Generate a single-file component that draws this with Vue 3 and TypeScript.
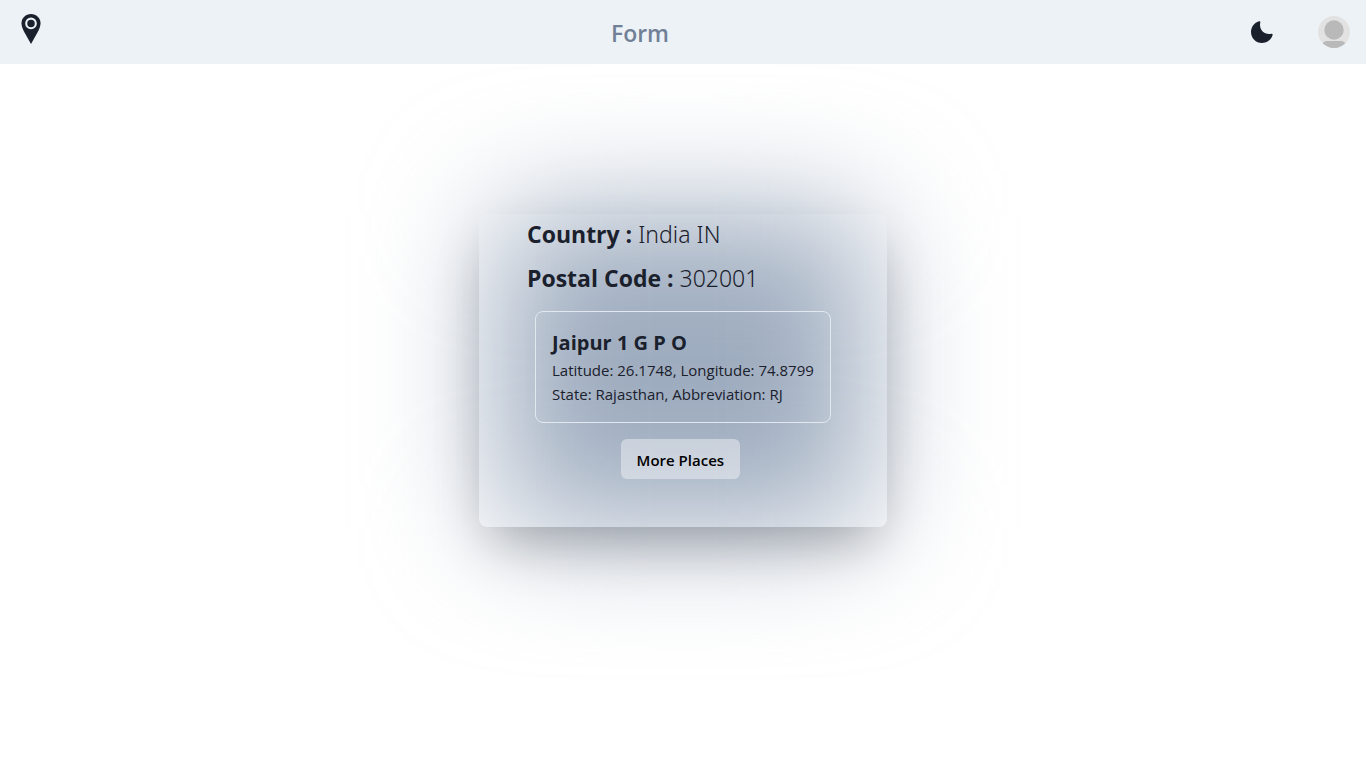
<script setup lang="ts">
import { ref } from 'vue'

interface Place {
  name: string
  latitude: string
  longitude: string
  state: string
  abbreviation: string
}

const country = 'India IN'
const postalCode = '302001'
const places = ref<Place[]>([
  { name: 'Jaipur 1 G P O', latitude: '26.1748', longitude: '74.8799', state: 'Rajasthan', abbreviation: 'RJ' },
])
</script>

<template>
  <div class="page">
    <header class="bar">
      <a class="logo" href="#" aria-label="Home">
        <svg viewBox="0 0 30 30" width="30" height="30" aria-hidden="true">
          <path fill="#1a202c" d="M15 0C9.700 0 5.500 4 5.500 9.200c0 3 1.300 6 2.900 9L15 30l6.600-11.800c1.600-3 2.900-6 2.900-9C24.500 4 20.300 0 15 0z" />
          <circle cx="15" cy="9.400" r="4.800" fill="#1a202c" stroke="#edf2f7" stroke-width="2.100" />
        </svg>
      </a>
      <a class="title" href="#">Form</a>
      <div class="actions">
        <button class="mode" type="button" aria-label="Toggle dark mode">
          <svg viewBox="0 0 24 24" width="24" height="24" aria-hidden="true">
            <path fill="#1a202c" d="M21.4,13.7C20.6,13.9,19.8,14,19,14c-5,0-9-4-9-9c0-0.8,0.1-1.6,0.3-2.4c0.1-0.3,0-0.7-0.3-1 c-0.3-0.3-0.6-0.4-1-0.3C4.3,2.7,1,7.1,1,12c0,6.1,4.9,11,11,11c4.9,0,9.3-3.3,10.6-8.1c0.1-0.3,0-0.7-0.3-1 C22.1,13.7,21.7,13.6,21.4,13.7z" />
          </svg>
        </button>
        <button class="avatar" type="button" aria-label="Account">
          <svg viewBox="0 0 32 32" width="32" height="32" aria-hidden="true">
            <rect width="32" height="32" fill="#e2e2e2" />
            <circle cx="16" cy="14" r="9.700" fill="#b9b9b9" />
            <rect x="4" y="25" width="24" height="12" rx="5" fill="#b9b9b9" />
          </svg>
        </button>
      </div>
    </header>

    <main class="content">
      <div class="stage">
        <div class="glow"></div>
        <section class="card">
          <p class="fact"><strong>Country :</strong> {{ country }}</p>
          <p class="fact"><strong>Postal Code :</strong> {{ postalCode }}</p>
          <article v-for="place in places" :key="place.name" class="place">
            <h2>{{ place.name }}</h2>
            <p>Latitude: {{ place.latitude }}, Longitude: {{ place.longitude }}</p>
            <p>State: {{ place.state }}, Abbreviation: {{ place.abbreviation }}</p>
          </article>
          <button class="more" type="button">More Places</button>
        </section>
      </div>
    </main>
  </div>
</template>

<style>
body {
  margin: 0;
  background: #fff;
}
</style>

<style scoped>
.page {
  min-height: 100vh;
  overflow: hidden;
  font-family: 'Segoe UI', 'Open Sans', 'Noto Sans', sans-serif;
  color: #1a202c;
}
.bar {
  position: relative;
  z-index: 2;
  display: flex;
  align-items: center;
  justify-content: space-between;
  height: 64px;
  padding: 0 16px;
  background: #edf2f7;
}
.logo {
  display: flex;
  padding-bottom: 6px;
}
.title {
  padding-top: 1px;
  font-size: 23px;
  font-weight: 600;
  line-height: 36px;
  color: #718096;
  text-decoration: none;
}
.actions {
  display: flex;
  align-items: center;
  gap: 28px;
}
button {
  border: 0;
  font-family: inherit;
  cursor: pointer;
}
.mode {
  display: flex;
  padding: 8px 16px;
  background: transparent;
}
.avatar {
  display: flex;
  padding: 0;
  border-radius: 50%;
  overflow: hidden;
  background: transparent;
}
.content {
  display: flex;
  justify-content: center;
  padding-top: 150px;
}
.stage {
  position: relative;
}
.glow {
  position: absolute;
  inset: 0 20px;
  background: #9eacbf;
  filter: blur(64px);
}
.card {
  position: relative;
  box-sizing: border-box;
  min-width: 408px;
  padding: 2px 48px 48px;
  border-radius: 8px;
  box-shadow: 0 25px 50px -12px rgba(0, 0, 0, 0.25);
}
.fact {
  margin: 0 0 8px;
  font-family: 'Segoe UI', 'Noto Sans', 'Open Sans', sans-serif;
  font-size: 23px;
  font-weight: 300;
  line-height: 36px;
}
.fact strong {
  font-family: 'Segoe UI', 'Open Sans', 'Noto Sans', sans-serif;
  font-weight: 700;
}
.place {
  margin: 15px 8px 16px;
  padding: 16px;
  border: 1px solid #e2e8f0;
  border-radius: 8px;
}
.place h2 {
  margin: 0;
  font-size: 20px;
  font-weight: 700;
  line-height: 30px;
}
.place p {
  margin: 0;
  font-size: 15px;
  font-weight: 400;
  line-height: 24px;
}
.more {
  display: block;
  height: 40px;
  margin-left: 30%;
  padding: 2px 16px 0;
  border-radius: 6px;
  background: rgba(255, 255, 255, 0.4);
  color: #000;
  font-size: 15px;
  font-weight: 600;
}
</style>
